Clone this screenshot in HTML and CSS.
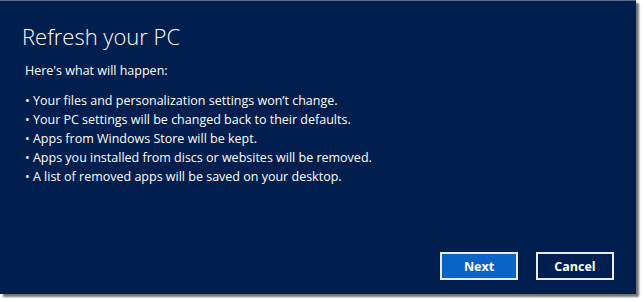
FILE: index.html
```html
<!DOCTYPE html>
<html lang="en">
<head>
  <meta charset="UTF-8">
  <title>Refresh your PC</title>
  <link rel="stylesheet" href="styles.css">
</head>
<body>
  <div class="refresh-wrap">
    <div class="refresh-panel">
      <h1 class="refresh-title">Refresh your PC</h1>
      <p class="refresh-intro">Here's what will happen:</p>
      <ul class="refresh-list">
        <li>Your files and personalization settings won’t change.</li>
        <li>Your PC settings will be changed back to their defaults.</li>
        <li>Apps from Windows Store will be kept.</li>
        <li>Apps you installed from discs or websites will be removed.</li>
        <li>A list of removed apps will be saved on your desktop.</li>
      </ul>
      <div class="refresh-actions">
        <button class="refresh-btn primary" type="button">Next</button>
        <button class="refresh-btn" type="button">Cancel</button>
      </div>
    </div>
  </div>
</body>
</html>
```
FILE: styles.css
```css
* {
  box-sizing: border-box;
}
body {
  margin: 0;
  background: #ffffff;
  font-family: 'Open Sans', 'Noto Sans', sans-serif;
}

.refresh-wrap {
  width: 641px;
  height: 298px;
}

.refresh-panel {
  width: 636px;
  height: 294px;
  background: #001e4e;
  color: #ffffff;
  padding: 19px 22px 14px 22px;
  display: flex;
  flex-direction: column;
  box-shadow: 3px 3px 2px rgba(0, 0, 0, 0.55);
  border-top: 1px solid #5b6e8e;
}

.refresh-title {
  margin: 0;
  font-size: 22px;
  font-weight: 300;
  line-height: 32px;
}

.refresh-intro {
  margin: 10px 0 0 3px;
  font-size: 12.5px;
  line-height: 18px;
}

.refresh-list {
  list-style: none;
  margin: 11px 0 0 3px;
  padding: 0;
  font-size: 12.5px;
  line-height: 19px;
}

.refresh-list li::before {
  content: '• ';
}

.refresh-actions {
  margin-top: auto;
  display: flex;
  justify-content: flex-end;
  gap: 18px;
}

.refresh-btn {
  width: 78px;
  height: 28px;
  border: 2px solid #e8ecf2;
  background: transparent;
  color: #ffffff;
  font-family: inherit;
  font-size: 12.5px;
  font-weight: 700;
  padding: 0;
}

.refresh-btn.primary {
  background: #0a64c8;
}
```
